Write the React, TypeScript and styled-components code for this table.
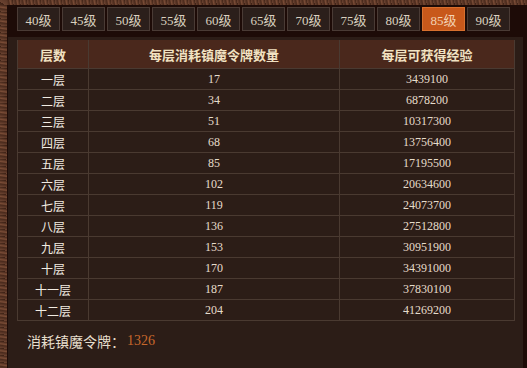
import styled, { createGlobalStyle } from 'styled-components';

const levels = ['40级', '45级', '50级', '55级', '60级', '65级', '70级', '75级', '80级', '85级', '90级'];

const rows = [
  ['一层', 17, 3439100],
  ['二层', 34, 6878200],
  ['三层', 51, 10317300],
  ['四层', 68, 13756400],
  ['五层', 85, 17195500],
  ['六层', 102, 20634600],
  ['七层', 119, 24073700],
  ['八层', 136, 27512800],
  ['九层', 153, 30951900],
  ['十层', 170, 34391000],
  ['十一层', 187, 37830100],
  ['十二层', 204, 41269200]
];

const GlobalStyle = createGlobalStyle`
  body {
    margin: 0;
    background: #1d0b07;
  }
`;

const Frame = styled.div`
  width: 527px;
  height: 368px;
  box-sizing: border-box;
  display: flex;
  flex-direction: column;
  background: #1d0b07;
  border-top: 5px solid #5a3626;
  border-left: 7px solid #5b3524;
  border-image: repeating-linear-gradient(
      45deg,
      #6a4230 0px,
      #4a2a1c 2px,
      #7a4c36 3px,
      #3e2216 5px
    )
    1;
  border-right: 0;
  border-bottom: 0;
  overflow: hidden;
  font-family: 'Liberation Serif', 'Noto Sans CJK SC', serif;
`;

const TabBar = styled.div`
  display: flex;
  gap: 2px;
  padding: 2px 0 0 10px;
  height: 24px;
`;

const Tab = styled.div<{ $active?: boolean }>`
  width: 43px;
  height: 24px;
  box-sizing: border-box;
  display: flex;
  align-items: center;
  justify-content: center;
  font-size: 13px;
  color: ${(p) => (p.$active ? '#f3d2b4' : '#d9cfbf')};
  background: ${(p) => (p.$active ? '#c8581b' : '#2b1f1b')};
  border: 1px solid ${(p) => (p.$active ? '#d8702e' : '#4a3b35')};
`;

const Panel = styled.div`
  flex: 1;
  margin: 6px 2px 0 1px;
  padding: 3px 8px 0 9px;
  background: #2c1d17;
  border-right: 2px solid #1d0b07;
`;

const Table = styled.div`
  display: flex;
  flex-direction: column;
  border-right: 1px solid #4a3a31;
  border-left: 1px solid #4a3a31;
  border-bottom: 1px solid #4a3a31;
`;

const Row = styled.div<{ $head?: boolean }>`
  display: grid;
  grid-template-columns: 70px 251px 1fr;
  height: ${(p) => (p.$head ? '28px' : '21px')};
  box-sizing: border-box;
  background: ${(p) => (p.$head ? '#4a281c' : 'transparent')};
  border-top: ${(p) => (p.$head ? '0' : '1px solid #4a3a31')};
`;

const Cell = styled.div<{ $head?: boolean; $num?: boolean }>`
  display: flex;
  align-items: center;
  justify-content: center;
  border-left: 1px solid #4a3a31;
  &:first-child {
    border-left: 0;
  }
  font-family: ${(p) =>
    p.$num ? "'Liberation Serif', serif" : "'Noto Sans CJK SC', sans-serif"};
  font-size: ${(p) => (p.$head ? '13px' : '12px')};
  font-weight: ${(p) => (p.$head ? 700 : 400)};
  color: ${(p) => (p.$head ? '#f1e2c2' : p.$num ? '#e6dccb' : '#f2ece2')};
`;

const Footer = styled.div`
  display: flex;
  align-items: center;
  height: 40px;
  padding-left: 10px;
  font-family: 'Noto Sans CJK SC', sans-serif;
  font-size: 14px;
  color: #e6ddcc;
`;

const Count = styled.span`
  font-family: 'Liberation Serif', serif;
  font-size: 14px;
  color: #c8682c;
  margin-left: 2px;
`;

export default function App() {
  return (
    <>
      <GlobalStyle />
      <Frame>
        <TabBar>
          {levels.map((lv) => (
            <Tab key={lv} $active={lv === '85级'}>
              {lv}
            </Tab>
          ))}
        </TabBar>
        <Panel>
          <Table>
            <Row $head>
              <Cell $head>层数</Cell>
              <Cell $head>每层消耗镇魔令牌数量</Cell>
              <Cell $head>每层可获得经验</Cell>
            </Row>
            {rows.map(([name, cost, exp]) => (
              <Row key={name as string}>
                <Cell>{name}</Cell>
                <Cell $num>{cost}</Cell>
                <Cell $num>{exp}</Cell>
              </Row>
            ))}
          </Table>
          <Footer>
            消耗镇魔令牌：<Count>1326</Count>
          </Footer>
        </Panel>
      </Frame>
    </>
  );
}
